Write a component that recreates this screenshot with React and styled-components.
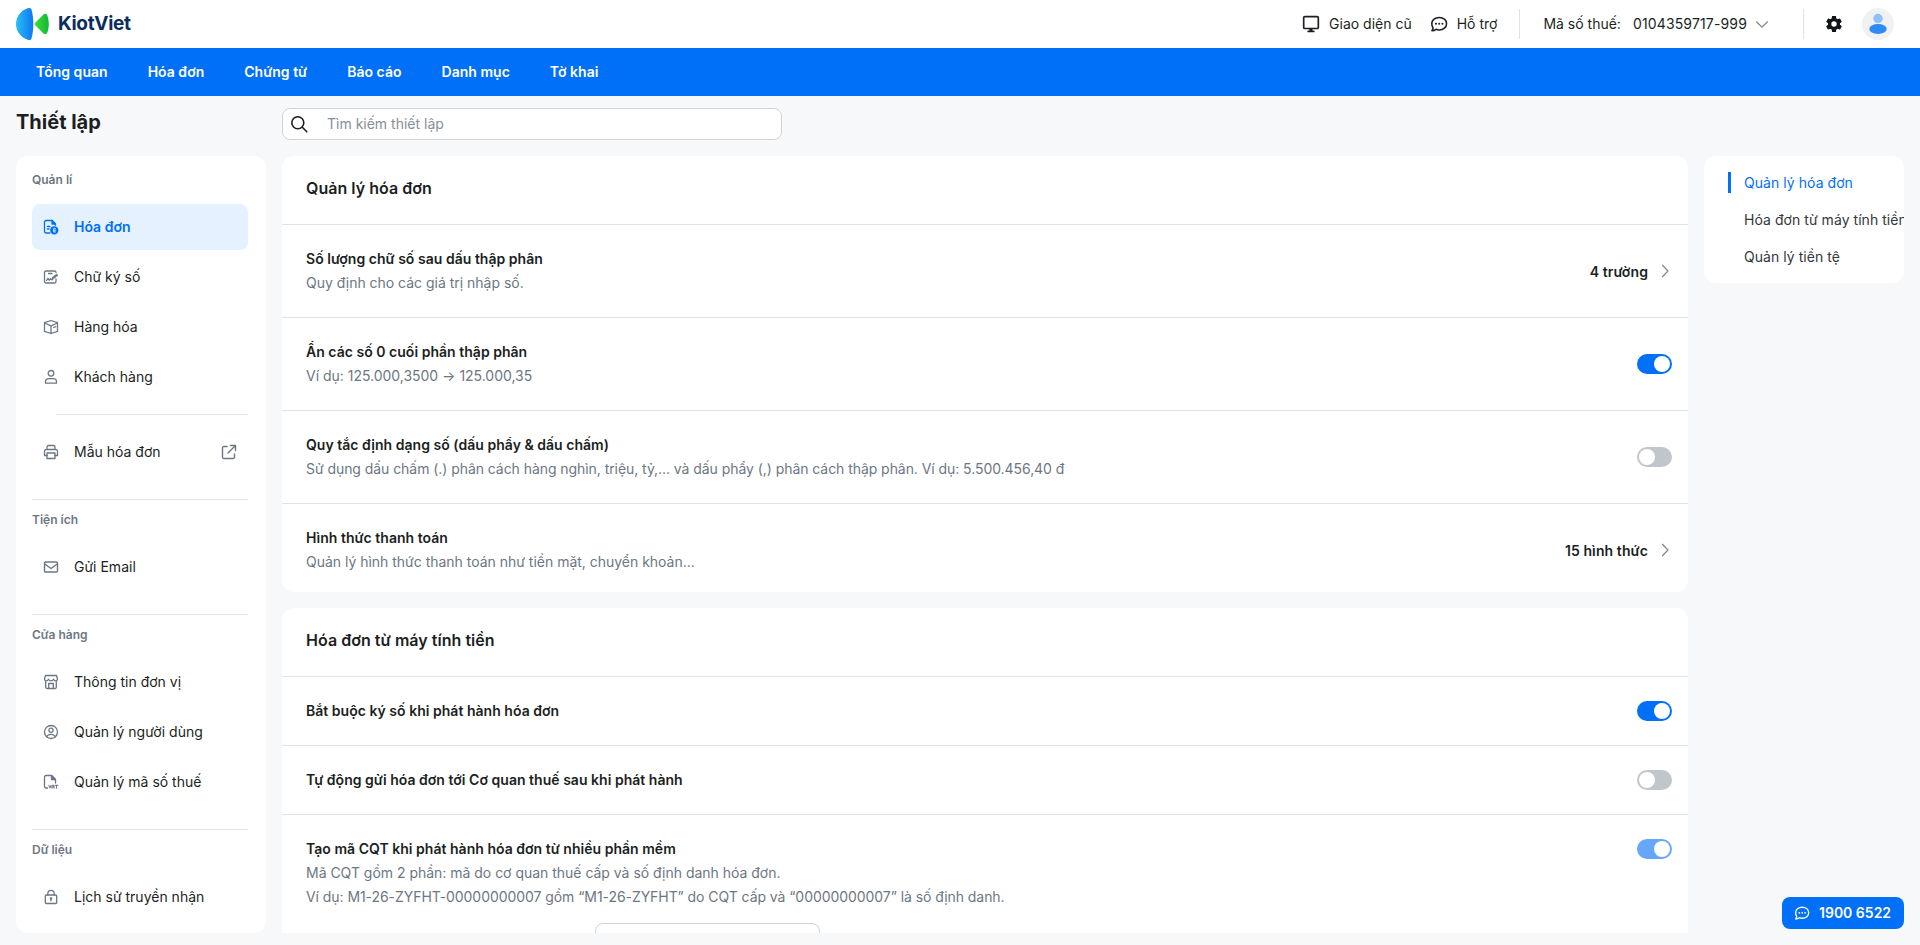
import React from "react";
import styled, { createGlobalStyle, css } from "styled-components";

const Global = createGlobalStyle`
  *, *::before, *::after { box-sizing: border-box; }
  html, body { margin: 0; height: 100%; }
  body {
    background: #f7f8fa;
    color: #1b1f23;
    font-family: Inter, "Liberation Sans", sans-serif;
    font-size: 14px;
    line-height: 24px;
    overflow: hidden;
  }
`;

const Page = styled.div`
  display: flex;
  flex-direction: column;
  height: 945px;
  overflow: hidden;
`;

const TopBar = styled.header`
  display: flex;
  align-items: center;
  height: 48px;
  flex: none;
  padding: 0 26px 0 16px;
  background: #fff;
`;

const Brand = styled.div`
  display: flex;
  align-items: center;
  gap: 9px;
  margin-right: auto;
  color: #0b2d5c;
  font-size: 19px;
  font-weight: 700;
  letter-spacing: -0.3px;
`;

const TopLink = styled.div`
  display: flex;
  align-items: center;
  gap: ${(p) => p.$gap || 9}px;
  margin-left: ${(p) => p.$ml || 0}px;
`;

const TaxCode = styled.span`
  letter-spacing: 0.15px;
`;

const VRule = styled.div`
  width: 1px;
  height: 30px;
  background: #dfe2e6;
  margin-left: ${(p) => p.$ml}px;
`;

const Avatar = styled.div`
  width: 32px;
  height: 32px;
  margin-left: 18px;
  border-radius: 50%;
  background: #f0f1f3;
`;

const NavBar = styled.nav`
  display: flex;
  align-items: center;
  gap: 40px;
  height: 48px;
  flex: none;
  padding-left: 36px;
  background: #0070f8;
  color: #fff;
  font-weight: 600;
  letter-spacing: 0.02px;
`;

const TitleRow = styled.div`
  display: flex;
  height: 60px;
  flex: none;
  padding: 12px 16px 0;
`;

const PageTitle = styled.h1`
  width: 266px;
  margin: 0;
  font-size: 20px;
  line-height: 28px;
  font-weight: 700;
`;

const SearchBox = styled.div`
  display: flex;
  align-items: center;
  gap: 19px;
  width: 500px;
  height: 32px;
  padding-left: 7px;
  border: 1px solid #cfd3d8;
  border-radius: 8px;
  background: #fff;
  color: #868e99;
`;

const Body = styled.div`
  display: flex;
  align-items: flex-start;
  gap: 16px;
  height: 777px;
  padding: 0 16px;
`;

const Sidebar = styled.aside`
  width: 250px;
  height: 777px;
  padding: 16px 18px 0 16px;
  border-radius: 12px;
  background: #fff;
`;

const Group = styled.section`
  & + & {
    margin-top: 24px;
    border-top: 1px solid #e2e4e8;
    padding-top: 12px;
  }
`;

const GroupTitle = styled.div`
  height: 16px;
  margin-bottom: 16px;
  color: #6c7784;
  font-size: 12px;
  line-height: 16px;
  font-weight: 600;
`;

const MenuItem = styled.div`
  display: flex;
  align-items: center;
  height: 46px;
  margin-bottom: 4px;
  padding: 0 11px;
  border-radius: 8px;
  color: #1b1f23;
  svg { color: #6c7784; }
  span { flex: 1; margin-left: 15px; }
  ${(p) =>
    p.$active &&
    css`
      background: #e5f1ff;
      color: #0070f8;
      font-weight: 600;
      svg { color: #0070f8; }
    `}
`;

const InnerRule = styled.div`
  height: 1px;
  margin: 14px 0 14px 24px;
  background: #e2e4e8;
`;

const Main = styled.main`
  display: flex;
  flex-direction: column;
  gap: 16px;
  width: 1406px;
  height: 777px;
  overflow: hidden;
`;

const Card = styled.section`
  flex: none;
  border-radius: 12px;
  background: #fff;
`;

const CardTitle = styled.h2`
  height: 68px;
  margin: 0;
  padding: 20px 24px;
  font-size: 16px;
  line-height: 24px;
  font-weight: 600;
  letter-spacing: 0.03px;
`;

const SettingRow = styled.div`
  display: flex;
  align-items: center;
  justify-content: space-between;
  height: ${(p) => p.$h}px;
  padding: ${(p) => p.$pt || 0}px 16px 0 24px;
  border-top: 1px solid #dfe2e6;
`;

const TallSetting = styled.div`
  padding: 22px 16px 24px 24px;
  border-top: 1px solid #dfe2e6;
`;

const TallHead = styled.div`
  display: flex;
  align-items: flex-start;
  justify-content: space-between;
`;

const SettingName = styled.div`
  font-weight: 600;
  letter-spacing: 0.025px;
`;

const SettingNote = styled.div`
  color: #6c7784;
  letter-spacing: ${(p) => (p.$tight ? "-0.06px" : "-0.015px")};
`;

const RowValue = styled.div`
  display: flex;
  align-items: center;
  gap: 13px;
  margin-right: 2px;
  font-weight: 600;
  letter-spacing: 0.1px;
  span { padding-top: 2px; }
`;

const Toggle = styled.div`
  display: flex;
  justify-content: ${(p) => (p.$on ? "flex-end" : "flex-start")};
  width: 35px;
  height: 20px;
  margin-top: ${(p) => p.$mt || 0}px;
  padding: 2px;
  border-radius: 10px;
  background: ${(p) => (p.$on ? "#0070f8" : "#c1c6cc")};
  opacity: ${(p) => (p.$disabled ? 0.6 : 1)};
  &::after {
    content: "";
    width: 16px;
    height: 16px;
    border-radius: 50%;
    background: #fff;
  }
`;

const CodeField = styled.div`
  width: 225px;
  height: 40px;
  margin: 14px 0 0 289px;
  border: 1px solid #cfd3d8;
  border-radius: 8px;
`;

const Outline = styled.aside`
  width: 200px;
  height: 127px;
  padding: 16px 0 0 24px;
  border-radius: 12px;
  background: #fff;
  overflow: hidden;
`;

const OutlineLink = styled.div`
  display: flex;
  align-items: center;
  height: 21px;
  margin-bottom: 16px;
  padding-left: 13px;
  border-left: 3px solid ${(p) => (p.$active ? "#0070f8" : "transparent")};
  color: ${(p) => (p.$active ? "#0070f8" : "#33383e")};
  letter-spacing: 0.05px;
  white-space: nowrap;
`;

const Hotline = styled.div`
  position: fixed;
  right: 16px;
  bottom: 16px;
  display: flex;
  align-items: center;
  gap: 9px;
  width: 122px;
  height: 32px;
  padding-left: 12px;
  border-radius: 8px;
  background: #0070f8;
  color: #fff;
  font-weight: 600;
`;

const Icon = ({ size = 16, children, w = 1.2 }) => (
  <svg width={size} height={size} viewBox="0 0 16 16" fill="none" stroke="currentColor" strokeWidth={w} strokeLinecap="round" strokeLinejoin="round">
    {children}
  </svg>
);

const icons = {
  invoice: (
    <Icon w={1.3}>
      <path d="M7 14H3.2A1.7 1.7 0 0 1 1.5 12.3V3.2A1.7 1.7 0 0 1 3.2 1.5H9L12.500 5v1.2M4.500 7.500H7M4.500 10H6" />
      <path d="M9 1.500V5h3.500z" fill="currentColor" />
      <circle cx="11.300" cy="11.300" r="3.500" fill="currentColor" />
      <path d="M12.600 9.700h-2v3.200h2M10.600 11.300h1.700" stroke="#fff" strokeWidth="0.800" />
    </Icon>
  ),
  sign: (
    <Icon w={1.3}>
      <path d="M13 9.800v2.700a1.500 1.500 0 0 1-1.500 1.500H3a1.500 1.500 0 0 1-1.500-1.500V3.500A1.500 1.500 0 0 1 3 2h8.500A1.500 1.500 0 0 1 13 3.500M5.500 4.500H9M3.500 11.500l1.500-2.200 1.200 1.900 1.300-1.400 1 .9h1" />
      <path d="M8.800 10.200l.5-1.900 4.500-3.400 1.200 1.300-4.400 3.500z" fill="currentColor" strokeWidth=".6" />
    </Icon>
  ),
  box: (
    <Icon w={1.3}>
      <path d="M8 1.500 14.500 3.600v8.800L8 14.500 1.500 12.400V3.600zM1.500 4 8 6.800 14.500 4M8 6.800v7.700M10.700 8.500l2-.8" />
    </Icon>
  ),
  person: (
    <Icon w={1.3}>
      <circle cx="8" cy="4.300" r="2.800" />
      <path d="M2.500 14.200v-1.400C2.500 10.800 4.200 9.700 6 9.700h4c1.800 0 3.500 1.100 3.500 3.100v1.400z" />
    </Icon>
  ),
  printer: (
    <Icon w={1.3}>
      <path d="M4 5.500V3a1.500 1.500 0 0 1 1.500-1.500h5A1.500 1.500 0 0 1 12 3v2.500M4 11.500H1.500V7.200A1.700 1.700 0 0 1 3.200 5.500h9.600a1.700 1.700 0 0 1 1.700 1.700v4.300H12" />
      <path d="M4 9h8v5.500H4z" />
    </Icon>
  ),
  external: (
    <Icon w={1.4}>
      <path d="M6 2.500H2.800a1.300 1.300 0 0 0-1.300 1.300v9.400a1.300 1.300 0 0 0 1.300 1.300h9.400a1.300 1.300 0 0 0 1.300-1.300V10M9.500 1.500h5v5M14.500 1.500 7 9" />
    </Icon>
  ),
  mail: (
    <Icon w={1.4}>
      <rect x="1.500" y="3" width="13" height="10" rx="1" />
      <path d="M1.800 5 8 9.500 14.200 5" />
    </Icon>
  ),
  store: (
    <Icon w={1.3}>
      <path d="M2.700 7v6.200a1.300 1.300 0 0 0 1.300 1.300h8a1.300 1.300 0 0 0 1.300-1.300V7M5.700 14.500V9.500h4.600v5M2.500 1.500h11l1 3.500c0 1.200-.8 1.800-1.800 1.800S11 6.200 10.500 5.300C10 6.200 9.200 6.800 8 6.800S6 6.200 5.500 5.300C5 6.200 4.300 6.800 3.300 6.800S1.500 6.200 1.500 5z" />
    </Icon>
  ),
  user: (
    <Icon w={1.3}>
      <circle cx="8" cy="8" r="6.500" />
      <circle cx="8" cy="6.300" r="2.100" />
      <path d="M3.700 12.800c.8-1.700 2.400-2.500 4.300-2.500s3.500.8 4.300 2.500" />
    </Icon>
  ),
  vat: (
    <Icon w={1.3}>
      <path d="M4.500 14H3a1.500 1.500 0 0 1-1.500-1.500V3A1.500 1.500 0 0 1 3 1.500h5.500L12.500 5.500V9" />
      <path d="M8.500 1.500v4h4z" fill="currentColor" />
      <path d="M5.800 11.300 6.900 14.200 8 11.300M9 14.200v-2.900h2v2.900M9 13h2M12 11.300h3M13.500 11.300v2.900" strokeWidth="1" />
    </Icon>
  ),
  lock: (
    <Icon w={1.3}>
      <rect x="2.300" y="6" width="11.400" height="8.500" rx="1" />
      <path d="M4.800 6V4.500a3.200 3.200 0 0 1 6.400 0V6M8 9.500v2.300" />
      <circle cx="8" cy="9.500" r=".7" fill="currentColor" />
    </Icon>
  ),
};

const ChatIcon = ({ size = 16, w = 1.4 }) => (
  <Icon size={size} w={w}>
    <path d="M8.200 2.200c3.700 0 6.500 2.300 6.500 5.500s-2.800 5.600-6.500 5.600c-1.100 0-2-.2-2.900-.6-.8.700-2 1.200-3.600 1.300.7-.8 1-1.700 1-2.700-.7-.9-1.100-2.200-1.100-3.600 0-3.200 2.900-5.500 6.600-5.500z" />
    <path d="M5.300 7.800h.01M8.200 7.800h.01M11.100 7.800h.01" strokeWidth="1.800" />
  </Icon>
);

const Logo = () => (
  <svg width="33" height="34" viewBox="0 0 33 34">
    <defs>
      <linearGradient id="blue" x1="0" x2="1"><stop offset="0" stopColor="#2bbdf8" /><stop offset="1" stopColor="#0f77f2" /></linearGradient>
      <linearGradient id="green" x1="0" x2="1"><stop offset="0" stopColor="#43db2b" /><stop offset="1" stopColor="#0cb83f" /></linearGradient>
    </defs>
    <path d="M12.500 1C5 3 0 9.500 0 17s5 14 12.500 16c1.500.3 2.500-.2 3-1.500C16.700 27 17.300 22 17.300 17S16.700 7 15.500 2.500C15 1.200 14 .7 12.500 1z" fill="url(#blue)" />
    <path d="M19.500 15.500 27.500 7.500c1.500-1.200 3-.8 3.700.7 1.100 2.700 1.600 5.700 1.600 8.800s-.5 6.100-1.600 8.800c-.7 1.500-2.200 1.900-3.700.7L19.500 18.500c-1-1-1-2 0-3z" fill="url(#green)" />
  </svg>
);

const Chevron = ({ down }) => (
  <svg width={down ? 14 : 9} height={down ? 9 : 14} viewBox={down ? "0 0 14 9" : "0 0 9 14"} fill="none" stroke="#80868d" strokeWidth="1.200">
    <path d={down ? "M1.300 1.500 7 7.200 12.700 1.500" : "M1.200 1 7 7 1.200 13"} />
  </svg>
);

const Setting = ({ name, note, tight, h, pt, children }) => (
  <SettingRow $h={h} $pt={pt}>
    <div>
      <SettingName>{name}</SettingName>
      {note && <SettingNote $tight={tight}>{note}</SettingNote>}
    </div>
    {children}
  </SettingRow>
);

const Item = ({ icon, label, active, external }) => (
  <MenuItem $active={active}>
    {icons[icon]}
    <span>{label}</span>
    {external && icons.external}
  </MenuItem>
);

export default function App() {
  return (
    <Page>
      <Global />
      <TopBar>
        <Brand><Logo />KiotViet</Brand>
        <TopLink>
          <Icon size={18} w={1.5}>
            <rect x="1.500" y="1.500" width="13" height="10.500" rx="1" />
            <path d="M5.500 14.600h5" />
            <path d="M7 12h2v2.500H7z" fill="currentColor" strokeWidth=".5" />
          </Icon>
          Giao diện cũ
        </TopLink>
        <TopLink $ml={18}><ChatIcon size={18} />Hỗ trợ</TopLink>
        <VRule $ml={22} />
        <TopLink $ml={23} $gap={12}><span>Mã số thuế:</span><TaxCode>0104359717-999</TaxCode></TopLink>
        <TopLink $ml={8}><Chevron down /></TopLink>
        <VRule $ml={34} />
        <TopLink $ml={20}>
          <svg width="20" height="20" viewBox="0 0 24 24" fill="#111418">
            <path d="M19.140 12.940c.040-.300.060-.610.060-.940 0-.320-.020-.640-.070-.940l2.030-1.580a.49.49 0 0 0 .120-.610l-1.920-3.320a.488.488 0 0 0-.590-.220l-2.390.960c-.500-.380-1.030-.700-1.620-.940l-.360-2.540a.484.484 0 0 0-.480-.410h-3.840c-.240 0-.430.170-.470.410l-.360 2.540c-.590.240-1.130.570-1.620.940l-2.390-.960c-.220-.080-.470 0-.590.220L2.740 8.870c-.120.210-.080.470.120.610l2.030 1.580c-.050.300-.090.630-.090.940s.020.640.070.940l-2.030 1.580a.49.49 0 0 0-.120.610l1.920 3.320c.120.220.370.290.590.220l2.390-.960c.500.380 1.030.700 1.620.940l.360 2.540c.050.240.240.410.480.410h3.840c.240 0 .440-.170.470-.410l.360-2.540c.590-.240 1.130-.560 1.620-.940l2.390.960c.220.080.470 0 .590-.220l1.920-3.320c.120-.220.070-.470-.120-.610zM12 15.200A3.200 3.200 0 1 1 12 8.800a3.200 3.200 0 0 1 0 6.400z" />
          </svg>
        </TopLink>
        <Avatar>
          <svg width="32" height="32" viewBox="0 0 32 32">
            <circle cx="16" cy="10.500" r="4.700" fill="#8fc0fa" />
            <ellipse cx="16" cy="21" rx="8.700" ry="5" fill="#2e8af5" />
          </svg>
        </Avatar>
      </TopBar>
      <NavBar>
        {["Tổng quan", "Hóa đơn", "Chứng từ", "Báo cáo", "Danh mục", "Tờ khai"].map((t) => <span key={t}>{t}</span>)}
      </NavBar>
      <TitleRow>
        <PageTitle>Thiết lập</PageTitle>
        <SearchBox>
          <svg width="18" height="18" viewBox="0 0 18 18" fill="none" stroke="#1b1f23" strokeWidth="1.600" strokeLinecap="round">
            <circle cx="7.800" cy="7.800" r="6" /><path d="m12.300 12.300 4.500 4.500" />
          </svg>
          Tìm kiếm thiết lập
        </SearchBox>
      </TitleRow>
      <Body>
        <Sidebar>
          <Group>
            <GroupTitle>Quản lí</GroupTitle>
            <Item icon="invoice" label="Hóa đơn" active />
            <Item icon="sign" label="Chữ ký số" />
            <Item icon="box" label="Hàng hóa" />
            <Item icon="person" label="Khách hàng" />
            <InnerRule />
            <Item icon="printer" label="Mẫu hóa đơn" external />
          </Group>
          <Group>
            <GroupTitle>Tiện ích</GroupTitle>
            <Item icon="mail" label="Gửi Email" />
          </Group>
          <Group>
            <GroupTitle>Cửa hàng</GroupTitle>
            <Item icon="store" label="Thông tin đơn vị" />
            <Item icon="user" label="Quản lý người dùng" />
            <Item icon="vat" label="Quản lý mã số thuế" />
          </Group>
          <Group>
            <GroupTitle>Dữ liệu</GroupTitle>
            <Item icon="lock" label="Lịch sử truyền nhận" />
          </Group>
        </Sidebar>
        <Main>
          <Card>
            <CardTitle>Quản lý hóa đơn</CardTitle>
            <Setting h={93} name="Số lượng chữ số sau dấu thập phân" note="Quy định cho các giá trị nhập số.">
              <RowValue><span>4 trường</span><Chevron /></RowValue>
            </Setting>
            <Setting h={93} name="Ẩn các số 0 cuối phần thập phân" note="Ví dụ: 125.000,3500 → 125.000,35"><Toggle $on /></Setting>
            <Setting h={93} tight name="Quy tắc định dạng số (dấu phẩy & dấu chấm)" note="Sử dụng dấu chấm (.) phân cách hàng nghìn, triệu, tỷ,... và dấu phẩy (,) phân cách thập phân. Ví dụ: 5.500.456,40 đ"><Toggle /></Setting>
            <Setting h={89} pt={4} name="Hình thức thanh toán" note="Quản lý hình thức thanh toán như tiền mặt, chuyển khoản...">
              <RowValue><span>15 hình thức</span><Chevron /></RowValue>
            </Setting>
          </Card>
          <Card>
            <CardTitle>Hóa đơn từ máy tính tiền</CardTitle>
            <Setting h={69} name="Bắt buộc ký số khi phát hành hóa đơn"><Toggle $on /></Setting>
            <Setting h={69} name="Tự động gửi hóa đơn tới Cơ quan thuế sau khi phát hành"><Toggle /></Setting>
            <TallSetting>
              <TallHead>
                <div>
                  <SettingName>Tạo mã CQT khi phát hành hóa đơn từ nhiều phần mềm</SettingName>
                  <SettingNote>Mã CQT gồm 2 phần: mã do cơ quan thuế cấp và số định danh hóa đơn.</SettingNote>
                  <SettingNote $tight>Ví dụ: M1-26-ZYFHT-00000000007 gồm “M1-26-ZYFHT” do CQT cấp và “00000000007” là số định danh.</SettingNote>
                </div>
                <Toggle $on $disabled $mt={2} />
              </TallHead>
              <CodeField />
            </TallSetting>
          </Card>
        </Main>
        <Outline>
          <OutlineLink $active>Quản lý hóa đơn</OutlineLink>
          <OutlineLink>Hóa đơn từ máy tính tiền</OutlineLink>
          <OutlineLink>Quản lý tiền tệ</OutlineLink>
        </Outline>
      </Body>
      <Hotline><ChatIcon />1900 6522</Hotline>
    </Page>
  );
}
